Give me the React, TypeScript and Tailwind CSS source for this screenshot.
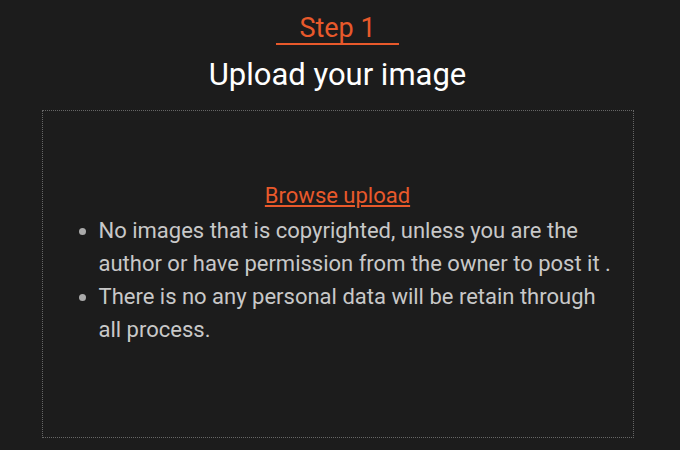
export default function App() {
  return (
    <div className="w-[680px] h-[450px] bg-[#1c1c1c] overflow-hidden">
      <div
        className="w-[675px] flex flex-col items-center"
        style={{ fontFamily: 'Roboto, "Liberation Sans", sans-serif' }}
      >
        <div className="mt-[13px] px-[23px] border-b-2 border-[#e8592b] text-[#e8592b] text-[27px] leading-[30px]">
          Step 1
        </div>
        <h1 className="mt-[12px] text-white text-[31px] leading-[36px]">Upload your image</h1>
        <div className="mt-[17px] w-[592px] h-[328px] border border-dotted border-[#666] px-4 pt-[68px]">
          <div className="text-center">
            <a href="#" className="text-[#e8592b] underline text-[22px] leading-[33px]">
              Browse upload
            </a>
          </div>
          <ul className="list-disc pl-10 text-[#c8c8c8] text-[22px] leading-[33px] mt-[2px] marker:text-[#aaa]">
            <li>No images that is copyrighted, unless you are the author or have permission from the owner to post it .</li>
            <li>There is no any personal data will be retain through all process.</li>
          </ul>
        </div>
      </div>
    </div>
  )
}
